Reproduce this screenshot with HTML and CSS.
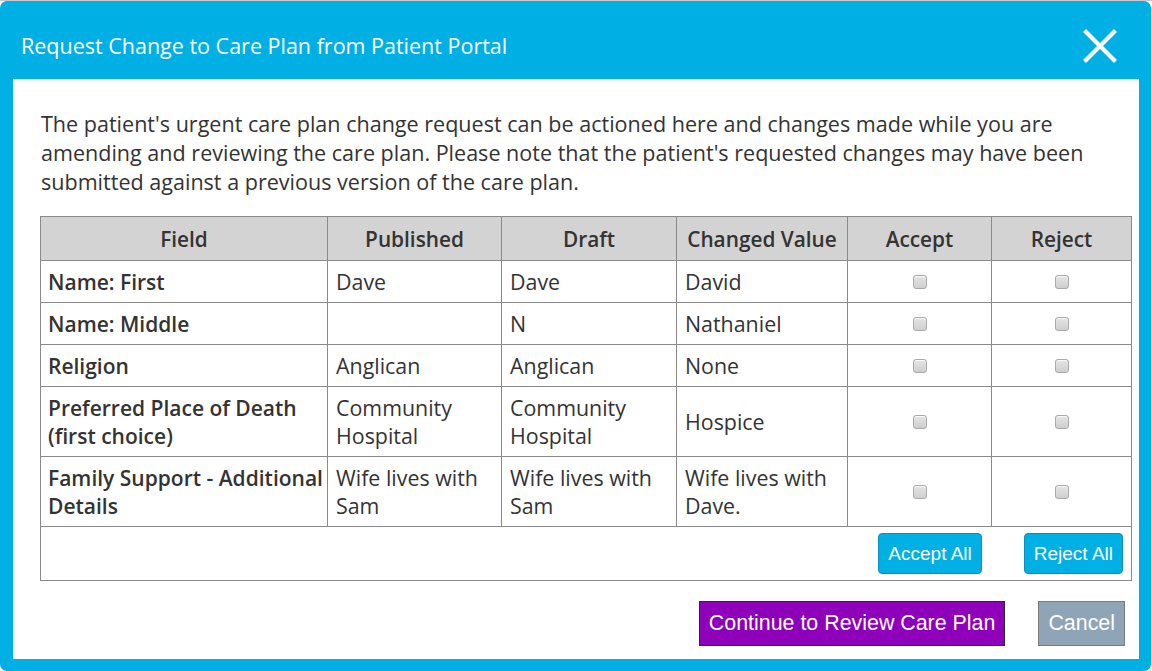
FILE: index.html
```html
<!DOCTYPE html>
<html>
<head>
<meta charset="utf-8">
<link rel="stylesheet" href="styles.css">
</head>
<body>
<div class="modal">
  <div class="modal-header">
    <h1 class="title">Request Change to Care Plan from Patient Portal</h1>
    <button class="close" aria-label="Close">
      <svg width="34" height="34" viewBox="0 0 34 34"><path d="M3 3 L31 31 M31 3 L3 31" stroke="#fff" stroke-width="4.2" stroke-linecap="square"/></svg>
    </button>
  </div>
  <div class="modal-body">
    <p class="intro">The patient's urgent care plan change request can be actioned here and changes made while you are amending and reviewing the care plan. Please note that the patient's requested changes may have been submitted against a previous version of the care plan.</p>
    <table class="changes">
      <colgroup>
        <col class="c1"><col class="c2"><col class="c3"><col class="c4"><col class="c5"><col class="c6">
      </colgroup>
      <thead>
        <tr><th>Field</th><th>Published</th><th>Draft</th><th>Changed Value</th><th>Accept</th><th>Reject</th></tr>
      </thead>
      <tbody>
        <tr><td class="field">Name: First</td><td>Dave</td><td>Dave</td><td>David</td><td class="chk"><input type="checkbox"></td><td class="chk"><input type="checkbox"></td></tr>
        <tr><td class="field">Name: Middle</td><td></td><td>N</td><td>Nathaniel</td><td class="chk"><input type="checkbox"></td><td class="chk"><input type="checkbox"></td></tr>
        <tr><td class="field">Religion</td><td>Anglican</td><td>Anglican</td><td>None</td><td class="chk"><input type="checkbox"></td><td class="chk"><input type="checkbox"></td></tr>
        <tr><td class="field">Preferred Place of Death (first choice)</td><td>Community Hospital</td><td>Community Hospital</td><td>Hospice</td><td class="chk"><input type="checkbox"></td><td class="chk"><input type="checkbox"></td></tr>
        <tr><td class="field">Family Support - Additional Details</td><td>Wife lives with Sam</td><td>Wife lives with Sam</td><td>Wife lives with Dave.</td><td class="chk"><input type="checkbox"></td><td class="chk"><input type="checkbox"></td></tr>
        <tr class="actions-row"><td colspan="6"><div class="all-actions"><button class="btn-blue">Accept All</button><button class="btn-blue">Reject All</button></div></td></tr>
      </tbody>
    </table>
    <div class="footer">
      <button class="btn-purple">Continue to Review Care Plan</button>
      <button class="btn-cancel">Cancel</button>
    </div>
  </div>
</div>
</body>
</html>
```
FILE: styles.css
```css
html, body {
  margin: 0;
  padding: 0;
  background: #ffffff;
}
body {
  border-top: 1px solid #c9c9c9;
  height: 670px;
  overflow: hidden;
}
.modal {
  width: 1151px;
  height: 670px;
  box-sizing: border-box;
  background: #00afe3;
  border-radius: 7px;
  display: flex;
  flex-direction: column;
  padding: 0 12px 12px 13px;
}
.modal-header {
  height: 78px;
  flex: none;
  display: flex;
  align-items: center;
  justify-content: space-between;
  padding: 12px 22px 0 8px;
  box-sizing: border-box;
}
.title {
  margin: 0;
  font-family: "Open Sans", sans-serif;
  font-weight: 400;
  font-size: 21.5px;
  line-height: 30px;
  color: #ffffff;
}
.close {
  background: none;
  border: 0;
  padding: 0;
  width: 34px;
  height: 34px;
  cursor: pointer;
}
.close svg { display: block; }
.modal-body {
  flex: 1;
  background: #ffffff;
  padding: 30px 8px 0 27px;
  font-family: "Open Sans", sans-serif;
  color: #333333;
}
.intro {
  margin: 0 0 20px 1px;
  font-size: 21.55px;
  line-height: 29px;
}
.changes {
  width: 1091px;
  table-layout: fixed;
  border-collapse: collapse;
  border: 1px solid #333333;
  font-size: 21.4px;
  line-height: 28px;
  color: #333333;
}
.c1 { width: 287px; }
.c2 { width: 174px; }
.c3 { width: 175px; }
.c4 { width: 171px; }
.c5 { width: 144px; }
.c6 { width: 140px; }
.changes th, .changes td {
  border: 1px solid #8a8a8a;
  padding: 7px 8px 6px 8px;
  vertical-align: middle;
  text-align: left;
}
.changes th {
  background: #d3d3d3;
  font-weight: 600;
  font-size: 20.8px;
  text-align: center;
  padding: 8px 4px 7px 4px;
}
.changes td.field {
  font-weight: 600;
  font-size: 21px;
  padding: 7px 1px 6px 7px;
}
.changes td.chk { text-align: center; }
.changes input[type="checkbox"] {
  appearance: none;
  -webkit-appearance: none;
  width: 14px;
  height: 14px;
  margin: 0;
  border: 1px solid #a9a9a9;
  border-radius: 3px;
  background: linear-gradient(#e4e4e4, #cfcfcf);
  box-shadow: inset 0 1px 1px rgba(255,255,255,0.8);
  vertical-align: middle;
  position: relative;
  top: -2px;
}
.actions-row td {
  padding: 6px 8px 6px 8px;
  border-top: 1px solid #8a8a8a;
}
.all-actions {
  display: flex;
  justify-content: flex-end;
  gap: 42px;
}
.btn-blue {
  font-family: "Liberation Sans", Arial, sans-serif;
  font-size: 19px;
  color: #ffffff;
  background: #00afe3;
  border: 1px solid #0a8fbd;
  border-radius: 4px;
  height: 41px;
  padding: 0 9px;
}
.footer {
  display: flex;
  justify-content: flex-end;
  gap: 33px;
  margin-top: 20px;
  padding-right: 6px;
}
.btn-purple, .btn-cancel {
  font-family: "Liberation Sans", Arial, sans-serif;
  font-size: 21.4px;
  color: #ffffff;
  height: 45px;
  padding: 0 9px;
}
.btn-purple {
  background: #8e00b9;
  border: 1px solid #2a2a2a;
}
.btn-cancel {
  background: #8fa4b7;
  border: 1px solid #7a7a7a;
}
```
